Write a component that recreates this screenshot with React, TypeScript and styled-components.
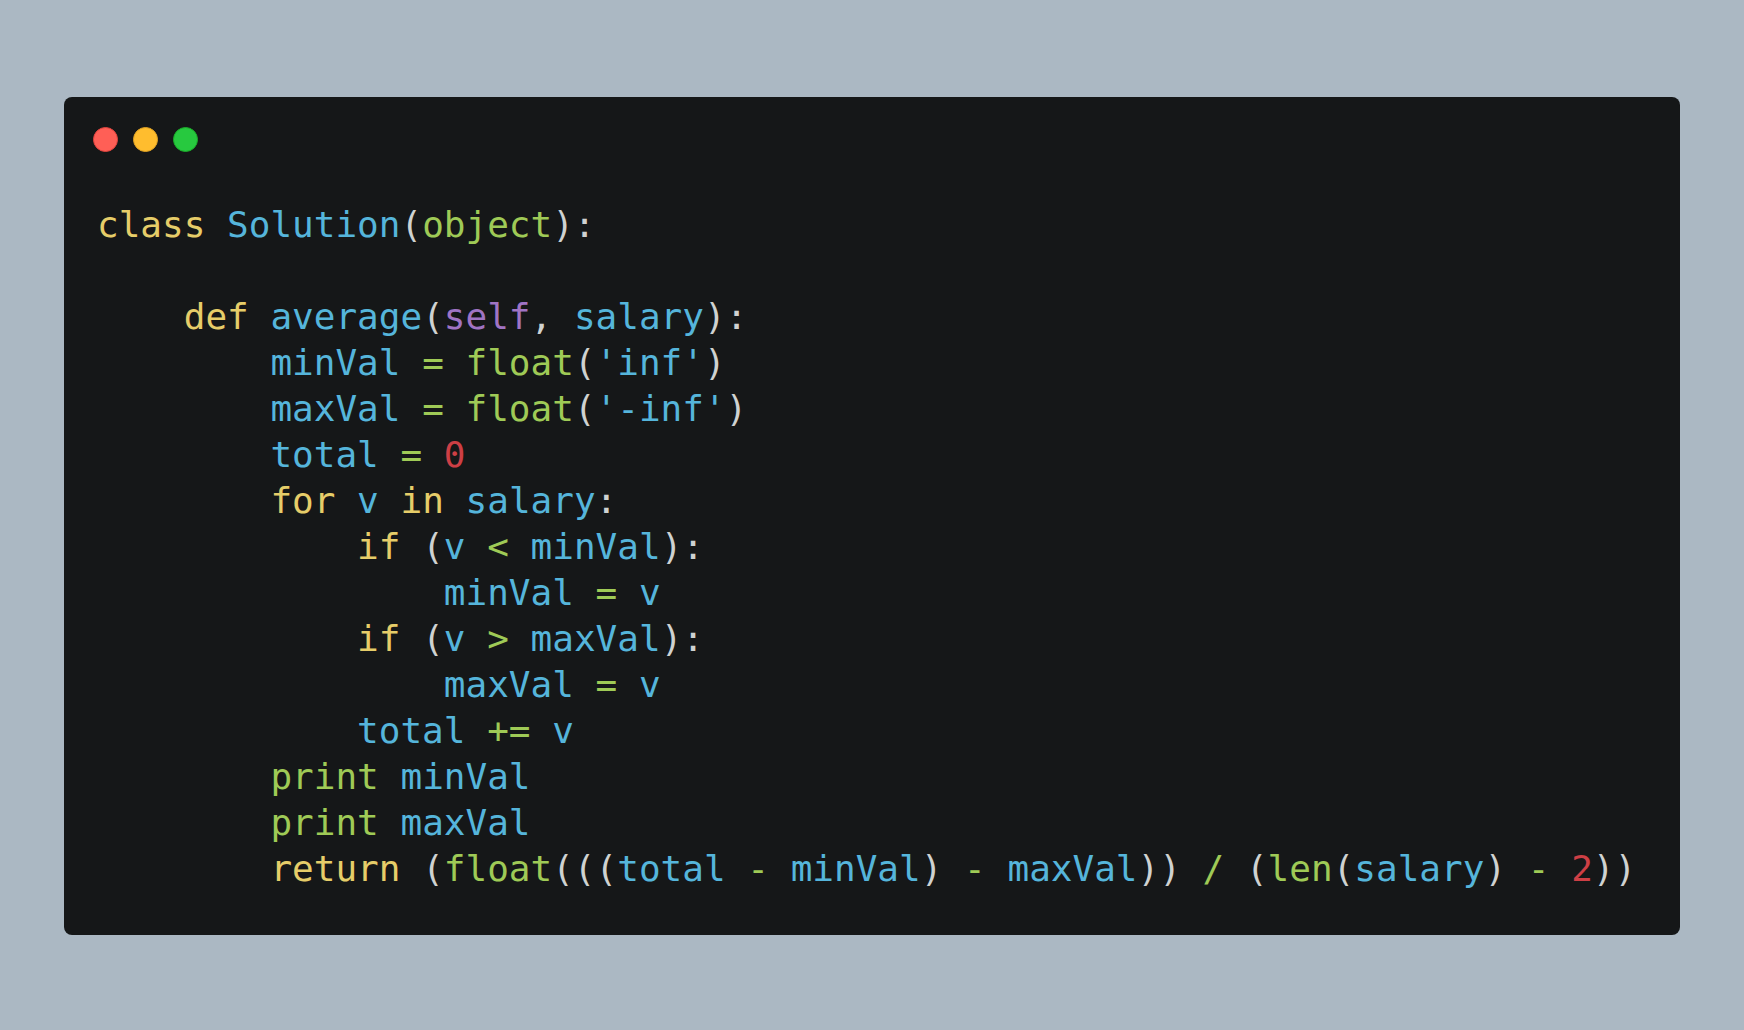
import React from "react";
import styled, { createGlobalStyle } from "styled-components";

const Global = createGlobalStyle`
  html, body { margin: 0; padding: 0; background: #abb8c3; }
  body { font-family: "DejaVu Sans", sans-serif; }
`;

const Page = styled.div`
  width: 1744px;
  height: 1030px;
  box-sizing: border-box;
  padding: 97px 64px 95px;
  display: flex;
  background: #abb8c3;
`;

const Window = styled.div`
  flex: 1;
  display: flex;
  flex-direction: column;
  background: #151718;
  border-radius: 8px;
  padding: 30px 29px 0 29px;
  box-sizing: border-box;
`;

const Controls = styled.div`
  display: flex;
  gap: 15px;
  height: 25px;
`;

const Dot = styled.span<{ $bg: string; $ring: string }>`
  width: 25px;
  height: 25px;
  box-sizing: border-box;
  border-radius: 50%;
  background: ${(p) => p.$bg};
  border: 1px solid ${(p) => p.$ring};
`;

const Code = styled.pre`
  margin: 50px 0 0 4px;
  font-family: "DejaVu Sans Mono", monospace;
  font-size: 36px;
  line-height: 46px;
  color: #cfd2d1;
  white-space: pre;
`;

const colors = {
  kw: "#e6cd69",
  id: "#55b5db",
  fn: "#9fca56",
  op: "#9fca56",
  self: "#a074c4",
  num: "#cd3f45",
  p: "#cfd2d1",
};

type Kind = keyof typeof colors;

const T = styled.span<{ $k: Kind }>`
  color: ${(p) => colors[p.$k]};
`;

type Tok = [Kind, string] | string;

const lines: Tok[][] = [
  [["kw", "class"], " ", ["id", "Solution"], ["p", "("], ["fn", "object"], ["p", "):"]],
  [],
  ["    ", ["kw", "def"], " ", ["id", "average"], ["p", "("], ["self", "self"], ["p", ","], " ", ["id", "salary"], ["p", "):"]],
  ["        ", ["id", "minVal"], " ", ["op", "="], " ", ["fn", "float"], ["p", "("], ["id", "'inf'"], ["p", ")"]],
  ["        ", ["id", "maxVal"], " ", ["op", "="], " ", ["fn", "float"], ["p", "("], ["id", "'-inf'"], ["p", ")"]],
  ["        ", ["id", "total"], " ", ["op", "="], " ", ["num", "0"]],
  ["        ", ["kw", "for"], " ", ["id", "v"], " ", ["kw", "in"], " ", ["id", "salary"], ["p", ":"]],
  ["            ", ["kw", "if"], " ", ["p", "("], ["id", "v"], " ", ["op", "<"], " ", ["id", "minVal"], ["p", "):"]],
  ["                ", ["id", "minVal"], " ", ["op", "="], " ", ["id", "v"]],
  ["            ", ["kw", "if"], " ", ["p", "("], ["id", "v"], " ", ["op", ">"], " ", ["id", "maxVal"], ["p", "):"]],
  ["                ", ["id", "maxVal"], " ", ["op", "="], " ", ["id", "v"]],
  ["            ", ["id", "total"], " ", ["op", "+="], " ", ["id", "v"]],
  ["        ", ["fn", "print"], " ", ["id", "minVal"]],
  ["        ", ["fn", "print"], " ", ["id", "maxVal"]],
  [
    "        ",
    ["kw", "return"], " ", ["p", "("], ["fn", "float"], ["p", "((("], ["id", "total"], " ", ["op", "-"], " ",
    ["id", "minVal"], ["p", ")"], " ", ["op", "-"], " ", ["id", "maxVal"], ["p", "))"], " ", ["op", "/"], " ",
    ["p", "("], ["fn", "len"], ["p", "("], ["id", "salary"], ["p", ")"], " ", ["op", "-"], " ", ["num", "2"], ["p", "))"],
  ],
];

export default function App() {
  return (
    <>
      <Global />
      <Page>
        <Window>
          <Controls>
            <Dot $bg="#ff5f56" $ring="#e0443e" />
            <Dot $bg="#ffbd2e" $ring="#dea123" />
            <Dot $bg="#27c93f" $ring="#1aab29" />
          </Controls>
          <Code>
            {lines.map((line, i) => (
              <React.Fragment key={i}>
                {line.map((t, j) =>
                  typeof t === "string" ? (
                    <React.Fragment key={j}>{t}</React.Fragment>
                  ) : (
                    <T key={j} $k={t[0]}>
                      {t[1]}
                    </T>
                  )
                )}
                {i < lines.length - 1 ? "\n" : null}
              </React.Fragment>
            ))}
          </Code>
        </Window>
      </Page>
    </>
  );
}
